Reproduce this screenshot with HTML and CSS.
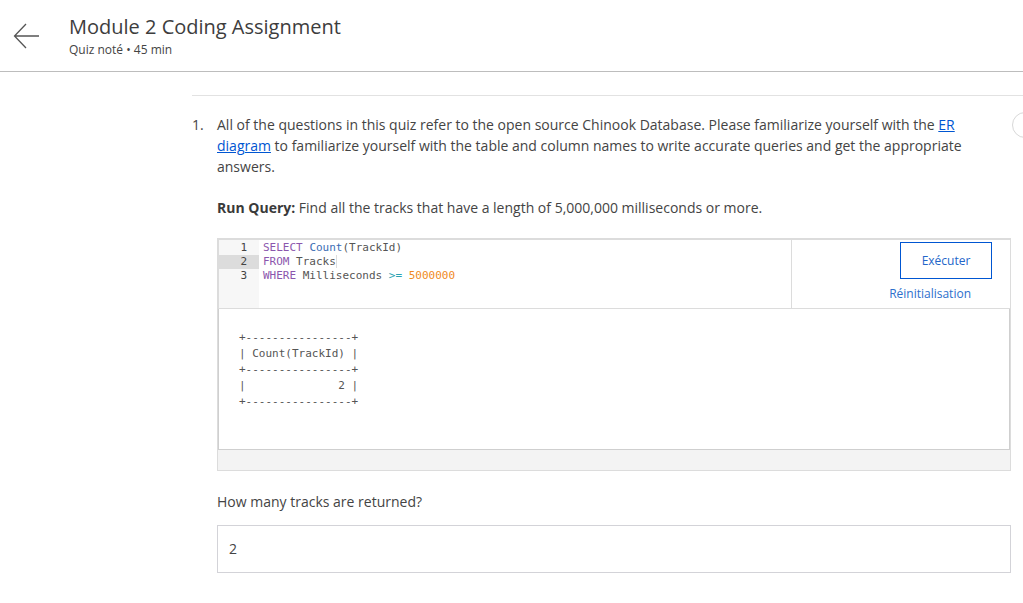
FILE: index.html
```html
<!DOCTYPE html>
<html lang="en">
<head>
<meta charset="utf-8">
<title>Module 2 Coding Assignment</title>
<link rel="stylesheet" href="styles.css">
</head>
<body>
<header class="header">
  <button class="back" aria-label="Back">
    <svg width="28" height="28" viewBox="0 0 28 28"><path d="M26 14H2M13 2L1.5 14L13 26" fill="none" stroke="#555" stroke-width="1.3"/></svg>
  </button>
  <div class="titles">
    <h1 class="title">Module 2 Coding Assignment</h1>
    <div class="sub">Quiz noté • 45 min</div>
  </div>
</header>
<main class="main">
  <div class="divider"></div>
  <div class="question">
    <div class="qnum">1.</div>
    <div class="qbody">
      <p class="para">All of the questions in this quiz refer to the open source Chinook Database. Please familiarize yourself with the <a href="#" class="link">ER diagram</a> to familiarize yourself with the table and column names to write accurate queries and get the appropriate answers.</p>
      <p class="para gap"><b>Run Query:</b> Find all the tracks that have a length of 5,000,000 milliseconds or more.</p>
      <div class="widget">
        <div class="top">
          <div class="editor">
            <div class="gutter">
              <div class="ln">1</div>
              <div class="ln active">2</div>
              <div class="ln">3</div>
            </div>
            <div class="code">
              <div class="cl"><span class="kw">SELECT</span> <span class="fn">Count</span>(TrackId)</div>
              <div class="cl"><span class="kw">FROM</span> Tracks<span class="cursor"></span></div>
              <div class="cl"><span class="kw">WHERE</span> Milliseconds <span class="op">&gt;=</span> <span class="num">5000000</span></div>
            </div>
          </div>
          <div class="actions">
            <button class="run">Exécuter</button>
            <a href="#" class="reset">Réinitialisation</a>
          </div>
        </div>
        <pre class="output">+----------------+
| Count(TrackId) |
+----------------+
|              2 |
+----------------+</pre>
        <div class="foot"></div>
      </div>
      <p class="para ask">How many tracks are returned?</p>
      <div class="answer">2</div>
    </div>
    <div class="circle"></div>
  </div>
</main>
</body>
</html>
```
FILE: styles.css
```css
html, body {
  margin: 0;
  padding: 0;
  background: #fff;
  overflow: hidden;
}
body {
  font-family: "Open Sans", "Noto Sans", sans-serif;
  color: #444;
  width: 1023px;
  height: 603px;
}
.header {
  display: flex;
  align-items: flex-start;
  height: 72px;
  border-bottom: 1px solid #bdbdbd;
  box-sizing: border-box;
}
.back {
  border: 0;
  background: none;
  padding: 0;
  margin: 22px 0 0 13px;
  width: 28px;
  height: 28px;
  cursor: pointer;
}
.titles {
  margin-left: 28px;
  padding-top: 13px;
}
.title {
  margin: 0;
  font-size: 20px;
  font-weight: 400;
  line-height: 28px;
  color: #3d3d3d;
}
.sub {
  font-size: 12px;
  line-height: 16px;
  margin-top: 1px;
  color: #444;
}
.main {
  padding-left: 192px;
  padding-top: 23px;
}
.divider {
  border-top: 1px solid #e2e2e2;
  width: 831px;
}
.question {
  display: flex;
  align-items: flex-start;
  padding-top: 18px;
}
.qnum {
  width: 25px;
  flex: none;
  font-size: 14px;
  line-height: 21px;
}
.qbody {
  width: 794px;
  flex: none;
}
.circle {
  flex: none;
  width: 24px;
  height: 24px;
  border: 1px solid #d8d8d8;
  border-radius: 50%;
  margin-left: 1px;
  margin-top: -2px;
}
.para {
  margin: 0;
  font-size: 14px;
  line-height: 21px;
  color: #444;
  padding-right: 40px;
}
.para b {
  font-weight: 700;
  color: #3a3a3a;
}
.gap {
  margin-top: 20px;
}
.link {
  color: #0056d2;
  text-decoration: underline;
}
.widget {
  margin-top: 20px;
  border: 1px solid #dcdcdc;
  background: #f3f3f3;
}
.top {
  display: flex;
  height: 70px;
  background: #fff;
  border-top: 1px solid #dcdcdc;
  border-left: 1px solid #dcdcdc;
  border-bottom: 1px solid #dcdcdc;
  box-sizing: border-box;
}
.editor {
  display: flex;
  width: 572px;
  border-right: 1px solid #dcdcdc;
}
.gutter {
  width: 40px;
  background: #f7f7f7;
  font-family: "DejaVu Sans Mono", monospace;
  font-size: 11px;
  line-height: 14px;
  color: #444;
  padding-top: 1px;
}
.ln {
  text-align: right;
  padding-right: 12px;
}
.ln.active {
  background: #dcdcdc;
}
.code {
  padding-left: 4px;
  padding-top: 1px;
  font-family: "DejaVu Sans Mono", monospace;
  font-size: 11px;
  line-height: 14px;
  color: #555;
}
.cl {
  white-space: pre;
  height: 14px;
}
.kw { color: #8b56ad; }
.fn { color: #3b6cb4; }
.op { color: #2aa3b3; }
.num { color: #f08a1e; }
.cursor {
  display: inline-block;
  width: 1px;
  height: 13px;
  background: #ddd;
  vertical-align: -3px;
}
.actions {
  flex: 1;
  display: flex;
  flex-direction: column;
  align-items: flex-end;
  padding-top: 2px;
  padding-right: 18px;
}
.run {
  width: 92px;
  height: 37px;
  border: 1px solid #0056d2;
  background: #fff;
  color: #2366c9;
  font-family: "Open Sans", sans-serif;
  font-size: 12px;
  cursor: pointer;
}
.reset {
  margin-top: 7px;
  margin-right: 21px;
  color: #2d6fcc;
  font-size: 12px;
  line-height: 16px;
  text-decoration: none;
}
.output {
  margin: 0;
  height: 141px;
  box-sizing: border-box;
  background: #fff;
  border-left: 1px solid #cfcfcf;
  border-right: 1px solid #cfcfcf;
  border-bottom: 1px solid #cfcfcf;
  padding: 21px 0 0 20px;
  font-family: "DejaVu Sans Mono", monospace;
  font-size: 11px;
  line-height: 16px;
  color: #555;
}
.foot {
  height: 20px;
}
.ask {
  margin-top: 20px;
}
.answer {
  margin-top: 13px;
  height: 48px;
  box-sizing: border-box;
  border: 1px solid #d3d3d8;
  padding-left: 11px;
  font-size: 14px;
  line-height: 46px;
  color: #444;
}
```
